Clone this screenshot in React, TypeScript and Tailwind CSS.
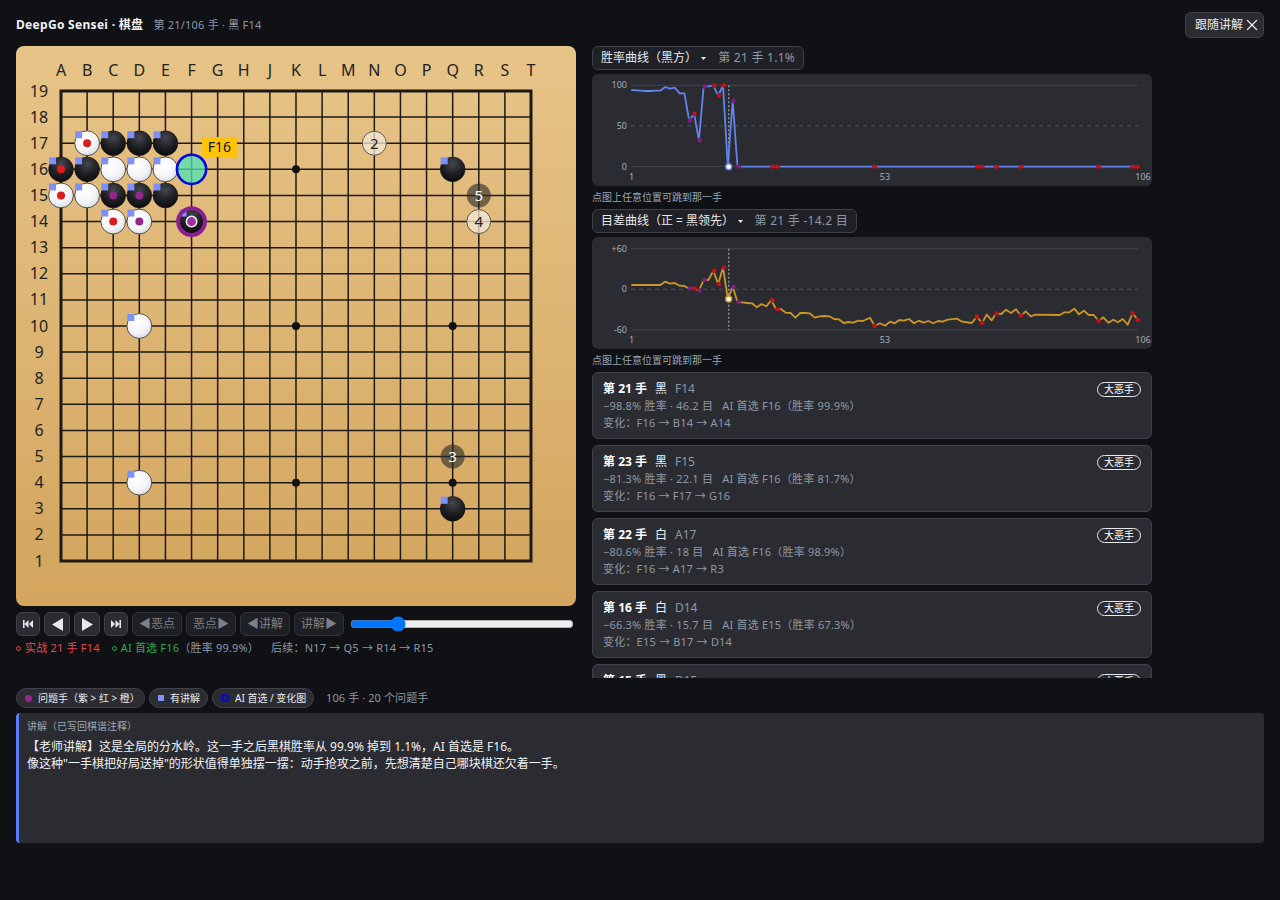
import { X } from "lucide-react"

const COLS = "ABCDEFGHJKLMNOPQRST"
const STEP = 470 / 18
const px = (col: string) => 45 + COLS.indexOf(col) * STEP
const py = (row: number) => 45 + (19 - row) * STEP

type Stone = [string, number, "b" | "w", string?]

const RED = "#d81e1e"
const PURPLE = "#93268f"

const stones: Stone[] = [
  ["B", 17, "w", RED], ["C", 17, "b"], ["D", 17, "b"], ["E", 17, "b"],
  ["A", 16, "b", RED], ["B", 16, "b"], ["C", 16, "w"], ["D", 16, "w"], ["E", 16, "w"],
  ["A", 15, "w", RED], ["B", 15, "w"], ["C", 15, "b", PURPLE], ["D", 15, "b", PURPLE], ["E", 15, "b"],
  ["C", 14, "w", RED], ["D", 14, "w", PURPLE],
  ["D", 10, "w"], ["D", 4, "w"], ["Q", 16, "b"], ["Q", 3, "b"],
]

const stars: [string, number][] = [["K", 16], ["Q", 16], ["D", 10], ["K", 10], ["Q", 10], ["D", 4], ["K", 4], ["Q", 4]]

const ghosts: [string, number, string, boolean][] = [
  ["N", 17, "2", false], ["R", 14, "4", false], ["R", 15, "5", true], ["Q", 5, "3", true],
]

function Board() {
  const rows = Array.from({ length: 19 }, (_, i) => i)
  return (
    <div className="h-[560px] w-[560px] shrink-0 overflow-hidden rounded-lg bg-linear-to-b from-[#e7c488] to-[#d3a55d]">
      <svg viewBox="0 0 560 560" className="block h-full w-full">
        <defs>
          <radialGradient id="blackStone" cx="50%" cy="28%" r="72%">
            <stop offset="0%" stopColor="#44474d" />
            <stop offset="55%" stopColor="#202125" />
            <stop offset="100%" stopColor="#0c0c0e" />
          </radialGradient>
          <radialGradient id="whiteStone" cx="40%" cy="35%" r="75%">
            <stop offset="0%" stopColor="#ffffff" />
            <stop offset="60%" stopColor="#f3f4f7" />
            <stop offset="100%" stopColor="#cfd3dc" />
          </radialGradient>
        </defs>

        {rows.map((i) => (
          <g key={i} stroke="#1c1a16" strokeWidth={1.5}>
            <line x1={45} x2={515} y1={45 + i * STEP} y2={45 + i * STEP} />
            <line y1={45} y2={515} x1={45 + i * STEP} x2={45 + i * STEP} />
          </g>
        ))}
        <rect x={45} y={45} width={470} height={470} fill="none" stroke="#1c1a16" strokeWidth={3} />
        {stars.map(([c, r]) => (
          <circle key={c + r} cx={px(c)} cy={py(r)} r={4} fill="#111" />
        ))}

        {rows.map((i) => (
          <g key={i} fontSize={16} fill="#222" textAnchor="middle">
            <text x={45 + i * STEP} y={29.5}>{COLS[i]}</text>
            <text x={23} y={50.5 + i * STEP}>{19 - i}</text>
          </g>
        ))}

        {stones.map(([c, r, color, mark]) => (
          <g key={c + r}>
            <circle
              cx={px(c)}
              cy={py(r)}
              r={12.4}
              fill={color === "b" ? "url(#blackStone)" : "url(#whiteStone)"}
              stroke={color === "b" ? "#111" : "#55504a"}
              strokeWidth={color === "b" ? 0.5 : 1}
            />
            <rect x={px(c) - 12} y={py(r) - 12} width={7} height={7} fill="#7f90fb" />
            {mark && <circle cx={px(c)} cy={py(r)} r={4} fill={mark} />}
          </g>
        ))}

        {/* AI pick */}
        <circle cx={px("F")} cy={py(16)} r={14.6} fill="#50e3b8" fillOpacity={0.75} stroke="#0505dc" strokeWidth={2.6} />
        <rect x={186} y={91} width={35} height={20} fill="#ffc40a" />
        <text x={203.5} y={106} fontSize={14} fill="#111" textAnchor="middle">F16</text>

        {/* current move */}
        <circle cx={px("F")} cy={py(14)} r={12} fill="url(#blackStone)" />
        <rect x={px("F") - 12} y={py(14) - 12} width={7} height={7} fill="#7f90fb" />
        <circle cx={px("F")} cy={py(14)} r={13.4} fill="none" stroke="#8a1f90" strokeWidth={4} />
        <circle cx={px("F")} cy={py(14)} r={5.2} fill="#a030a0" stroke="#f4f4f4" strokeWidth={1.5} />

        {ghosts.map(([c, r, n, dark]) => (
          <g key={n}>
            <circle
              cx={px(c)}
              cy={py(r)}
              r={12}
              fill={dark ? "#2b2b2b" : "#f4ead9"}
              fillOpacity={dark ? 0.62 : 0.75}
              stroke={dark ? "none" : "#5c5a55"}
              strokeWidth={1}
            />
            <text x={px(c)} y={py(r) + 5.5} fontSize={15} textAnchor="middle" fill={dark ? "#fff" : "#222"}>
              {n}
            </text>
          </g>
        ))}
      </svg>
    </div>
  )
}

function NavButton({ children, w }: { children: React.ReactNode; w: string }) {
  return (
    <button className={`flex h-6 items-center justify-center rounded-md border border-[#3f424a] bg-[#2b2c32] text-[#e8eaee] ${w}`}>
      {children}
    </button>
  )
}

function JumpButton({ label }: { label: string }) {
  return (
    <button className="flex h-6 w-[50px] items-center justify-center rounded-md border border-[#33353c] bg-[#1e2025] text-xs text-[#7d8086]">
      {label}
    </button>
  )
}

function Controls() {
  return (
    <div className="mt-1.5 flex h-6 items-center gap-1">
      <NavButton w="w-6">
        <svg width="10" height="8" viewBox="0 0 10 8" fill="currentColor"><rect x="0" y="0" width="1.6" height="8" /><path d="M5.5 0v8L1.6 4zM10 0v8L6 4z" /></svg>
      </NavButton>
      <NavButton w="w-[26px]">
        <svg width="11" height="13" viewBox="0 0 11 13" fill="currentColor"><path d="M11 0v13L0 6.5z" /></svg>
      </NavButton>
      <NavButton w="w-[26px]">
        <svg width="11" height="13" viewBox="0 0 11 13" fill="currentColor"><path d="M0 0v13l11-6.500z" /></svg>
      </NavButton>
      <NavButton w="w-6">
        <svg width="10" height="8" viewBox="0 0 10 8" fill="currentColor"><rect x="8.400" y="0" width="1.6" height="8" /><path d="M0 0v8l4-4zM4.500 0v8l3.900-4z" /></svg>
      </NavButton>
      <JumpButton label="◀恶点" />
      <JumpButton label="恶点▶" />
      <JumpButton label="◀讲解" />
      <JumpButton label="讲解▶" />
      <input type="range" min={1} max={106} defaultValue={21} className="ml-[2px] w-[224px] accent-[#0075ff]" />
    </div>
  )
}

type Pt = [number, number]
const toLine = (pts: Pt[]) => pts.map(([x, y]) => `${x.toFixed(1)},${y.toFixed(1)}`).join(" ")

// both charts are traced at 3x, so the sample values get mapped back to the 560x112 box
const winrateY = [150, 151, 152, 153, 153, 152, 152, 141, 146, 143, 160, 160, 242, 221, 301, 139, 139, 136, 167, 136, 380, 182, 380]
const winratePts: Pt[] = [...winrateY.map((y, i): Pt => [(139 + i * 14.475) / 3 - 7, y / 3 - 34]), [546, 92.7]]

const scoreY = [
  240, 240, 240, 240, 240, 240, 240, 230, 236, 234, 242, 243, 251, 250, 257, 225, 225, 197, 238, 187, 282, 245, 291, 292, 294,
  295, 307, 297, 304, 285, 313, 312, 323, 324, 338, 324, 324, 325, 338, 334, 333, 334, 342, 343, 354, 351, 353, 347, 348,
]
const scoreTail: Pt[] = [
  [-30, 248], [-16, 273], [0, 265], [15, 272], [30, 260], [44, 265], [58, 255], [72, 257], [87, 252], [102, 265], [116, 257],
  [130, 263], [145, 258], [160, 265], [174, 258], [188, 260], [203, 254], [232, 251], [246, 260], [275, 264], [291, 245],
  [306, 264], [320, 239], [335, 256], [349, 235], [364, 237], [378, 224], [393, 234], [408, 223], [423, 242], [437, 229],
  [452, 244], [466, 239], [540, 240], [553, 232], [568, 232], [583, 221], [597, 238], [612, 227], [626, 240], [641, 240],
  [656, 258], [670, 247], [685, 263], [700, 254], [714, 262], [728, 252], [743, 269], [758, 234], [773, 255],
]
const scorePts: Pt[] = [
  ...scoreY.map((y, i): Pt => [(139 + i * 14.475) / 3 - 7, y / 3 - 32]),
  ...scoreTail.map(([x, y]): Pt => [288 + x / 3, y / 3 - 2]),
]

const redTailX = [292, 306, 350, 423, 656, 758, 773]
const winrateMarks: [number, number, string][] = [
  ...[[315, 242], [344, 301], [359, 139], [446, 182], [461, 380]].map(([x, y]): [number, number, string] => [x / 3 - 7, y / 3 - 34, "#8a1a8a"]),
  ...[[329, 221], [388, 136], [402, 167], [417, 136], [563, 380], [578, 380], [869, 380]].map(([x, y]): [number, number, string] => [x / 3 - 7, y / 3 - 34, "#d60c14"]),
  ...redTailX.map((x): [number, number, string] => [288 + x / 3, 92.7, "#d60c14"]),
]
const scoreMarks: [number, number, string][] = [
  ...[[315, 251], [344, 257], [359, 225], [446, 245], [461, 291]].map(([x, y]): [number, number, string] => [x / 3 - 7, y / 3 - 32, "#8a1a8a"]),
  ...[[329, 250], [388, 197], [402, 238], [417, 187], [563, 285], [578, 313], [869, 363]].map(([x, y]): [number, number, string] => [x / 3 - 7, y / 3 - 32, "#d60c14"]),
  ...[[291, 245], [306, 264], [349, 235], [423, 242], [656, 258], [758, 234], [773, 255]].map(([x, y]): [number, number, string] => [288 + x / 3, y / 3 - 2, "#d60c14"]),
]

interface ChartProps {
  labels: string[]
  lineColor: string
  pts: Pt[]
  marks: [number, number, string][]
  current: Pt
  top: number
}

function Chart({ labels, lineColor, pts, marks, current, top }: ChartProps) {
  const mid = top + 40.6
  const bottom = top + 81.3
  return (
    <div className="mt-1 h-[112px] shrink-0 rounded-md bg-[#2b2c32]">
      <svg viewBox="0 0 560 112" className="block h-full w-full">
        <line x1={39} x2={546} y1={top} y2={top} stroke="#41444c" />
        <line x1={39} x2={546} y1={mid} y2={mid} stroke="#50535b" strokeDasharray="4 4" />
        <line x1={39} x2={546} y1={bottom} y2={bottom} stroke="#41444c" />
        <g fontSize={9} fill="#a4abb5" textAnchor="end">
          <text x={35} y={top + 3}>{labels[0]}</text>
          <text x={35} y={mid + 3}>{labels[1]}</text>
          <text x={35} y={bottom + 3}>{labels[2]}</text>
        </g>
        <g fontSize={9} fill="#a4abb5" textAnchor="middle">
          <text x={39.500} y={106}>1</text>
          <text x={293} y={106}>53</text>
          <text x={551} y={106}>106</text>
        </g>
        <line x1={136.700} x2={136.700} y1={top} y2={bottom} stroke="#8d9199" strokeWidth={1.4} strokeDasharray="2 2" />
        <polyline points={toLine(pts)} fill="none" stroke={lineColor} strokeWidth={1.8} strokeLinejoin="round" />
        {marks.map(([x, y, c], i) => (
          <circle key={i} cx={x} cy={y} r={2.3} fill={c} stroke="#2b2c32" strokeWidth={0.4} />
        ))}
        <circle cx={current[0]} cy={current[1]} r={3} fill="#fff" stroke={lineColor} strokeWidth={1.4} />
      </svg>
    </div>
  )
}

function CurveSelect({ title, value, width }: { title: string; value: string; width: string }) {
  return (
    <div className={`flex h-6 shrink-0 items-center rounded-md border border-[#3f424a] bg-[#1f2126] pl-2 text-xs ${width}`}>
      <span className="text-[#e8eaee]">{title}</span>
      <svg width="5" height="3" viewBox="0 0 5 3" fill="#e8eaee" className="ml-auto mr-1"><path d="M0 0h5L2.500 3z" /></svg>
      <span className="ml-2 mr-2 tracking-[0.25px] text-[#8c98a6]">{value}</span>
    </div>
  )
}

const moves = [
  { n: 21, side: "黑", at: "F14", loss: "−98.8%", pts: "46.2", ai: "F16", rate: "99.9%", line: "F16 → B14 → A14" },
  { n: 23, side: "黑", at: "F15", loss: "−81.3%", pts: "22.1", ai: "F16", rate: "81.7%", line: "F16 → F17 → G16" },
  { n: 22, side: "白", at: "A17", loss: "−80.6%", pts: "18", ai: "F16", rate: "98.9%", line: "F16 → A17 → R3" },
  { n: 16, side: "白", at: "D14", loss: "−66.3%", pts: "15.7", ai: "E15", rate: "67.3%", line: "E15 → B17 → D14" },
]

function MoveCard({ n, side, at, children }: { n: number; side: string; at: string; children?: React.ReactNode }) {
  return (
    <div className="relative h-[67px] shrink-0 rounded-md border border-[#3f424a] bg-[#2b2c32] px-2.5 pt-[7px]">
      <div className="flex h-[17px] items-center text-xs">
        <span className="font-bold text-white">第 {n} 手</span>
        <span className="ml-2 text-[#f1f2f4]">{side}</span>
        <span className="ml-2 text-[#8c98a6]">{at}</span>
      </div>
      {children}
      <span className="absolute right-2.5 top-[9px] flex h-[15px] w-11 items-center justify-center rounded-full border border-[#e8eaee] text-[10px] text-white">
        大恶手
      </span>
    </div>
  )
}

function RightColumn() {
  return (
    <div className="flex h-[632px] w-[560px] shrink-0 flex-col overflow-hidden">
      <CurveSelect title="胜率曲线（黑方）" value="第 21 手 1.1%" width="w-[212px]" />
      <Chart labels={["100", "50", "0"]} lineColor="#6384ee" pts={winratePts} marks={winrateMarks} current={[136.700, 92.700]} top={11.300} />
      <p className="h-[23px] shrink-0 pt-1 text-[10px] leading-[14px] text-[#9aa5b1]">点图上任意位置可跳到那一手</p>
      <CurveSelect title="目差曲线（正 = 黑领先）" value="第 21 手 -14.2 目" width="w-[265px]" />
      <Chart labels={["+60", "0", "-60"]} lineColor="#cc9528" pts={scorePts} marks={scoreMarks} current={[136.700, 62]} top={11.700} />
      <p className="h-[23px] shrink-0 pt-1 text-[10px] leading-[14px] text-[#9aa5b1]">点图上任意位置可跳到那一手</p>
      <div className="flex shrink-0 flex-col gap-1.5">
        {moves.map((m) => (
          <MoveCard key={m.n} n={m.n} side={m.side} at={m.at}>
            <div className="h-[17px] whitespace-pre text-[11px] leading-[17px] tracking-[0.2px] text-[#8c98a6]">
              {m.loss} 胜率 · {m.pts} 目{"   "}AI 首选 {m.ai}（胜率 {m.rate}）
            </div>
            <div className="h-[17px] text-[11px] leading-[17px] tracking-[0.2px] text-[#8c98a6]">变化：{m.line}</div>
          </MoveCard>
        ))}
        <MoveCard n={15} side="黑" at="D15" />
      </div>
    </div>
  )
}

function Legend() {
  return (
    <div className="mt-2.5 flex h-5 items-center gap-1 text-[10px] text-[#e8eaee]">
      <span className="flex h-5 w-[129px] items-center rounded-full border border-[#3f424a] bg-[#2b2c32] pl-2">
        <span className="mr-1.5 h-[7px] w-[7px] rounded-full bg-[#93268f]" />问题手（紫 &gt; 红 &gt; 橙）
      </span>
      <span className="flex h-5 w-[59px] items-center rounded-full border border-[#3f424a] bg-[#2b2c32] pl-2">
        <span className="mr-1.5 h-[6px] w-[6px] bg-[#7f90fb]" />有讲解
      </span>
      <span className="flex h-5 w-[102px] items-center rounded-full border border-[#3f424a] bg-[#2b2c32] pl-2">
        <span className="mr-1.5 h-2 w-2 rounded-full border-2 border-[#0505dc]" />AI 首选 / 变化图
      </span>
      <span className="ml-2 text-[11px] tracking-[0.1px] text-[#8c98a6]">106 手 · 20 个问题手</span>
    </div>
  )
}

export default function App() {
  return (
    <div className="min-h-screen bg-[#0f1115] px-4 font-['Noto_Sans','Noto_Sans_CJK_SC',sans-serif]">
      <header className="flex h-[46px] items-start justify-between pt-3">
        <div className="flex h-[26px] items-center">
          <span className="text-xs font-bold tracking-[0.3px] text-[#f1f2f4]">DeepGo Sensei · 棋盘</span>
          <span className="ml-2.5 text-[11px] tracking-[0.22px] text-[#8c98a6]">第 21/106 手 · 黑 F14</span>
        </div>
        <button className="flex h-[26px] w-[79px] items-center rounded-md border border-[#3f424a] bg-[#2b2c32] pl-[9px] text-xs text-[#e8eaee]">
          跟随讲解
          <X className="h-[18px] w-[18px] shrink-0" strokeWidth={1.6} />
        </button>
      </header>

      <main className="flex h-[632px] gap-4">
        <div className="w-[560px] shrink-0">
          <Board />
          <Controls />
          <div className="mt-[5px] flex h-[14px] items-center whitespace-pre text-[11px] tracking-[0.2px]">
            <span className="h-[5px] w-[5px] rounded-full border border-[#e5484d]" />
            <span className="ml-1 text-[#e5484d]">实战 21 手 F14</span>
            <span className="ml-3 h-[5px] w-[5px] rounded-full border border-[#2fa84f]" />
            <span className="ml-1 text-[#2fa84f]">AI 首选 F16</span>
            <span className="text-[#8c98a6]">（胜率 99.9%）</span>
            <span className="ml-3 text-[#8c98a6]">后续：N17 → Q5 → R14 → R15</span>
          </div>
        </div>
        <RightColumn />
      </main>

      <Legend />

      <section className="mt-[5px] h-[130px] rounded border-l-[3px] border-[#5b7cfa] bg-[#2b2c32] px-2 py-1.5">
        <div className="text-[10px] leading-[14px] text-[#9aa5b1]">讲解（已写回棋谱注释）</div>
        <p className="mt-[5px] text-xs leading-[17px] text-[#f1f2f4]">
          【老师讲解】这是全局的分水岭。这一手之后黑棋胜率从 99.9% 掉到 1.1%，AI 首选是 F16。
          <br />
          像这种"一手棋把好局送掉"的形状值得单独摆一摆：动手抢攻之前，先想清楚自己哪块棋还欠着一手。
        </p>
      </section>
    </div>
  )
}
